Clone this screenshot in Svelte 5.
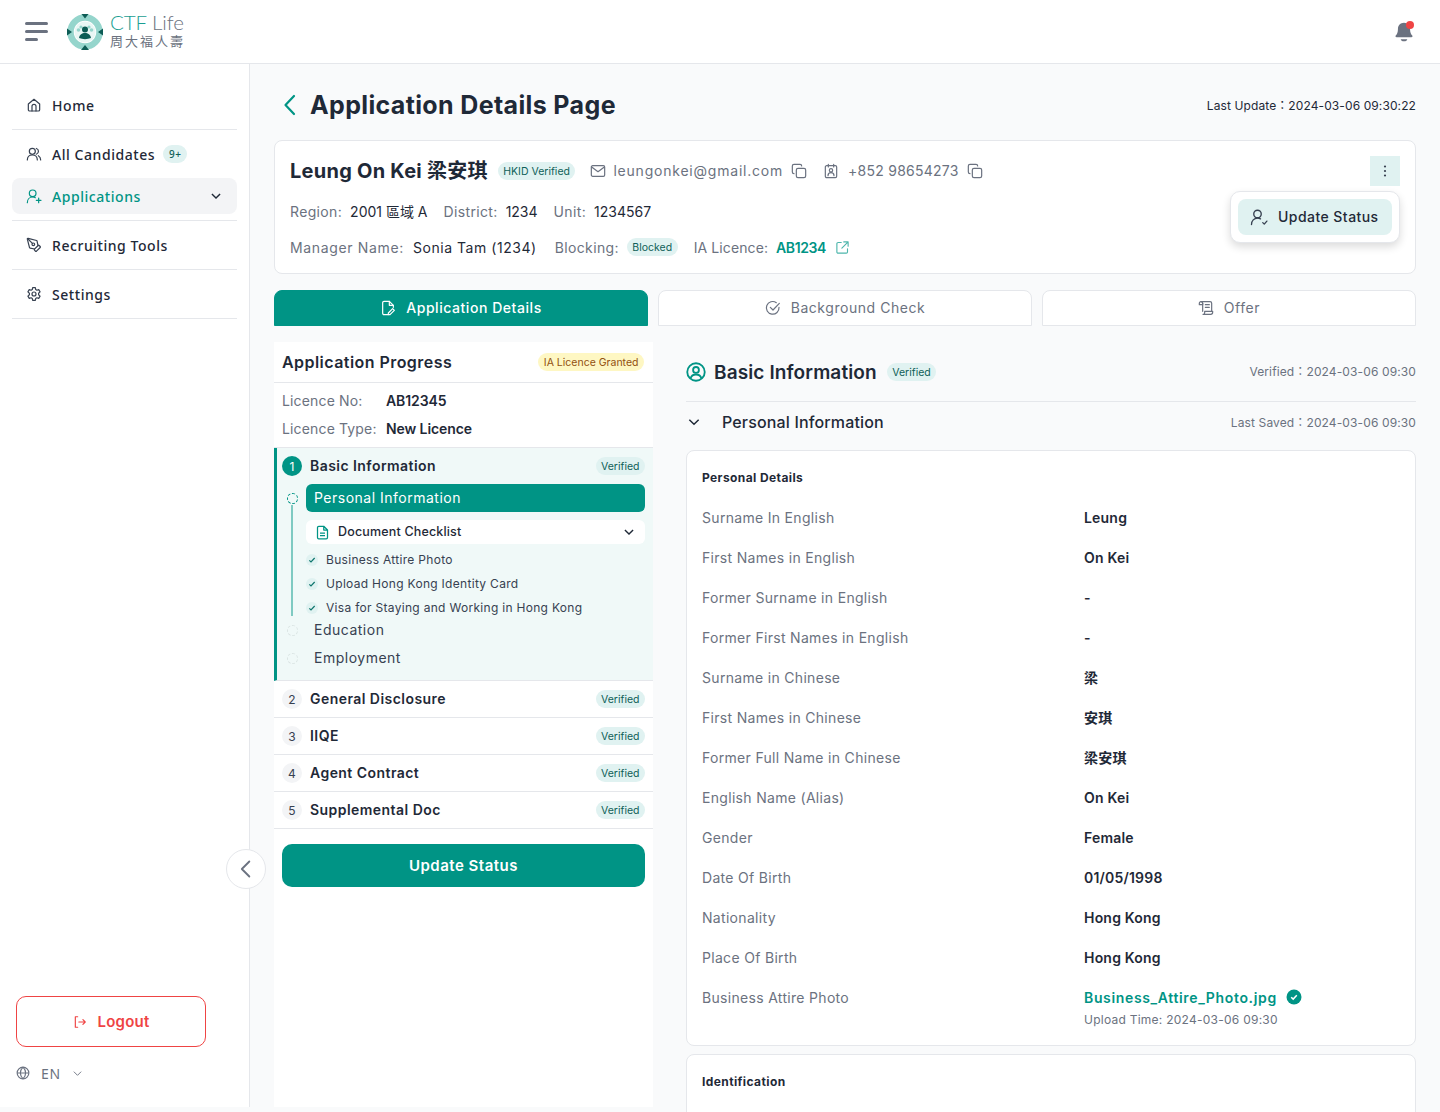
<script lang="ts">
  const details = [
    ["Surname In English", "Leung"],
    ["First Names in English", "On Kei"],
    ["Former Surname in English", "-"],
    ["Former First Names in English", "-"],
    ["Surname in Chinese", "梁"],
    ["First Names in Chinese", "安琪"],
    ["Former Full Name in Chinese", "梁安琪"],
    ["English Name (Alias)", "On Kei"],
    ["Gender", "Female"],
    ["Date Of Birth", "01/05/1998"],
    ["Nationality", "Hong Kong"],
    ["Place Of Birth", "Hong Kong"],
  ];
  const checks = [
    "Business Attire Photo",
    "Upload Hong Kong Identity Card",
    "Visa for Staying and Working in Hong Kong",
  ];
  const steps = [
    { n: 2, title: "General Disclosure" },
    { n: 3, title: "IIQE" },
    { n: 4, title: "Agent Contract" },
    { n: 5, title: "Supplemental Doc" },
  ];
</script>

<div class="shell">
  <header class="topbar">
    <button class="burger" type="button" aria-label="Menu">
      <span></span><span></span><span class="short"></span>
    </button>
    <div class="logo">
      <svg width="38" height="38" viewBox="0 0 38 38">
        <circle cx="19" cy="19" r="14.5" fill="none" stroke="#95d5cc" stroke-width="6.5" />
        <circle cx="19" cy="19" r="10.5" fill="#e9f6f4" />
        <path d="M15.5 1h7L19 5.5zM15 37l4-5 4 5zM1 15.5l5 3.5-5 3.5zM37 15.5v7l-5-3.5z" fill="#0d5c55" />
        <circle cx="12.5" cy="17" r="1.8" fill="#95d5cc" />
        <circle cx="25.5" cy="17" r="1.8" fill="#95d5cc" />
        <circle cx="15" cy="14" r="1.6" fill="#95d5cc" />
        <circle cx="23" cy="14" r="1.6" fill="#95d5cc" />
        <circle cx="19" cy="16.5" r="3" fill="#0d5c55" />
        <path d="M13 25c.5-3.500 3-5 6-5s5.500 1.500 6 5c-3.500 1.500-8.500 1.500-12 0z" fill="#0d5c55" />
      </svg>
      <div class="logo-text">
        <div class="logo-en"><span>CTF</span> <em>Life</em></div>
        <div class="logo-zh">周大福人壽</div>
      </div>
    </div>
    <div class="bell">
      <svg width="22" height="22" viewBox="0 0 20 20">
        <path d="M10 1.500c-3.300 0-5.500 2.500-5.500 5.700 0 3.300-.8 4.500-2 6-.5.7-.2 1.600.8 1.600h13.400c1 0 1.300-.9.800-1.600-1.200-1.500-2-2.700-2-6 0-3.200-2.200-5.700-5.500-5.700z" fill="#6b7280" />
        <path d="M7 16.500h6c-.4 1.300-1.600 2-3 2s-2.600-.7-3-2z" fill="#6b7280" />
      </svg>
      <i></i>
    </div>
  </header>

  <div class="body">
    <aside class="sidebar">
      <nav class="nav">
        <div class="group">
          <a class="item">
            <svg class="ico" viewBox="0 0 24 24"><path d="M3.500 10.500 12 3.500l8.500 7V19a2 2 0 0 1-2 2h-13a2 2 0 0 1-2-2z" /><path d="M9 21v-7a3 3 0 0 1 6 0v7" /></svg>
            Home
          </a>
        </div>
        <div class="group">
          <a class="item">
            <svg class="ico" viewBox="0 0 24 24"><circle cx="9.500" cy="8" r="4.500" /><path d="M2 21c0-4.500 3-7.500 7.500-7.500S17 16.500 17 21" /><path d="M15.500 3.700a4.500 4.500 0 0 1 0 8.600M18.500 14.500c2.200 1.200 3.500 3.500 3.500 6.500" /></svg>
            All Candidates
            <span class="count">9+</span>
          </a>
          <a class="item active">
            <svg class="ico" viewBox="0 0 24 24"><circle cx="10" cy="8" r="5" /><path d="M2 22c0-5 3.500-8.500 8-8.500 1.500 0 3 .4 4 1" /><path d="M19 15v7M15.500 18.500h7" /></svg>
            Applications
            <svg class="chev" viewBox="0 0 24 24"><path d="m5 8.500 7 7 7-7" /></svg>
          </a>
        </div>
        <div class="group">
          <a class="item">
            <svg class="ico" viewBox="0 0 24 24"><path d="M15.700 21.300a1 1 0 0 1-1.400 0l-1.600-1.600a1 1 0 0 1 0-1.400l5.600-5.600a1 1 0 0 1 1.400 0l1.600 1.600a1 1 0 0 1 0 1.400z" /><path d="m18 13-1.400-6.900a1 1 0 0 0-.7-.8L3.200 2a1 1 0 0 0-1.200 1.200l3.300 12.700a1 1 0 0 0 .8.700L13 18" /><path d="m2.300 2.300 7.300 7.300" /><circle cx="11" cy="11" r="2" /></svg>
            Recruiting Tools
          </a>
        </div>
        <div class="group">
          <a class="item">
            <svg class="ico" viewBox="0 0 24 24"><circle cx="12" cy="12" r="3" /><path d="M10 2.500h4l.6 2.900 1.700 1 2.800-1 2 3.400-2.200 2v2.400l2.200 2-2 3.400-2.800-1-1.700 1-.6 2.900h-4l-.6-2.900-1.700-1-2.800 1-2-3.400 2.200-2v-2.400l-2.200-2 2-3.400 2.800 1 1.700-1z" /></svg>
            Settings
          </a>
        </div>
      </nav>
      <div class="side-foot">
        <button class="logout" type="button">
          <svg width="14" height="14" viewBox="0 0 24 24" fill="none" stroke="currentColor" stroke-width="2" stroke-linecap="round" stroke-linejoin="round"><path d="M8 3H4v18h4M10 12h11M17 8l4 4-4 4" /></svg>
          Logout
        </button>
        <div class="lang">
          <svg width="14" height="14" viewBox="0 0 24 24" fill="none" stroke="#6b7280" stroke-width="2"><circle cx="12" cy="12" r="10" /><path d="M2 12h20M12 2c-6 6-6 14 0 20M12 2c6 6 6 14 0 20" /></svg>
          <span>EN</span>
          <svg width="11" height="11" viewBox="0 0 24 24" fill="none" stroke="#6b7280" stroke-width="2"><path d="m4 8 8 8 8-8" /></svg>
        </div>
      </div>
      <button class="collapse" type="button" aria-label="Collapse">
        <svg width="20" height="20" viewBox="0 0 24 24" fill="none" stroke="#6b7280" stroke-width="2.200" stroke-linecap="round" stroke-linejoin="round"><path d="M16 3 7 12l9 9" /></svg>
      </button>
    </aside>

    <main class="main">
      <div class="title-row">
        <svg width="24" height="24" viewBox="0 0 24 24" fill="none" stroke="#009485" stroke-width="2.200" stroke-linecap="round" stroke-linejoin="round"><path d="m16 3-8.500 9 8.500 9" /></svg>
        <h1>Application Details Page</h1>
        <span class="updated">Last Update：2024-03-06 09:30:22</span>
      </div>

      <section class="profile">
        <div class="line name-line">
          <h2>Leung On Kei 梁安琪</h2>
          <span class="chip">HKID Verified</span>
          <svg class="mini mail" viewBox="0 0 24 24"><rect x="2" y="4" width="20" height="16" rx="2" /><path d="m2.500 6 9.500 7 9.500-7" /></svg>
          <span class="contact email">leungonkei@gmail.com</span>
          <svg class="mini" viewBox="0 0 24 24"><rect x="8" y="8" width="14" height="14" rx="2.500" /><path d="M16 4.500A2.500 2.500 0 0 0 13.500 2h-9A2.500 2.500 0 0 0 2 4.500v9A2.500 2.500 0 0 0 4.500 16" /></svg>
          <svg class="mini idcard" viewBox="0 0 24 24"><rect x="3.500" y="4" width="17" height="18" rx="2" /><path d="M8 2v4M16 2v4" /><circle cx="12" cy="11" r="2.500" /><path d="M7.500 19c0-3 2-4.500 4.500-4.500s4.500 1.500 4.500 4.500" /></svg>
          <span class="contact">+852 98654273</span>
          <svg class="mini" viewBox="0 0 24 24"><rect x="8" y="8" width="14" height="14" rx="2.500" /><path d="M16 4.500A2.500 2.500 0 0 0 13.500 2h-9A2.500 2.500 0 0 0 2 4.500v9A2.500 2.500 0 0 0 4.500 16" /></svg>
        </div>
        <div class="line meta">
          <span class="pair"><b>Region:</b>2001 區域 A</span>
          <span class="pair"><b>District:</b>1234</span>
          <span class="pair"><b>Unit:</b>1234567</span>
        </div>
        <div class="line meta">
          <span class="pair wide"><b>Manager Name:</b>Sonia Tam (1234)</span>
          <span class="pair"><b>Blocking:</b><span class="chip">Blocked</span></span>
          <span class="pair tight"><b>IA Licence:</b><a class="licence">AB1234</a>
            <svg class="mini ext" viewBox="0 0 24 24"><path d="M20 14v5a2 2 0 0 1-2 2H5a2 2 0 0 1-2-2V6a2 2 0 0 1 2-2h5M14 3h7v7M21 3 11 13" /></svg>
          </span>
        </div>
        <button class="more" type="button" aria-label="More">
          <svg width="14" height="14" viewBox="0 0 14 14" fill="#374151"><circle cx="7" cy="2.500" r="1.100" /><circle cx="7" cy="7" r="1.100" /><circle cx="7" cy="11.500" r="1.100" /></svg>
        </button>
        <div class="popover">
          <button class="pop-btn" type="button">
            <svg width="18" height="18" viewBox="0 0 24 24" fill="none" stroke="#374151" stroke-width="1.800" stroke-linecap="round" stroke-linejoin="round"><circle cx="10" cy="8" r="5" /><path d="M2 22c0-5 3.500-8.500 8-8.500 1.800 0 3 .4 4 1" /><path d="m17 19.500 2 2 3.500-4" /></svg>
            Update Status
          </button>
        </div>
      </section>

      <div class="tabs">
        <button class="tab on" type="button">
          <svg viewBox="0 0 24 24"><path d="M12 22H6a2 2 0 0 1-2-2V4a2 2 0 0 1 2-2h8l6 6v3" /><path d="M14 2v6h6" /><path d="m19 13 2.500 2.500L15 22h-2.500v-2.500z" /></svg>
          Application Details
        </button>
        <button class="tab" type="button">
          <svg viewBox="0 0 24 24"><path d="M21 11a9.500 9.500 0 1 1-4-7" /><path d="m8 11 4 4 9.500-10" /></svg>
          Background Check
        </button>
        <button class="tab" type="button">
          <svg viewBox="0 0 24 24"><path d="M7 17V5a2.500 2.500 0 0 0-2.500-2.500H18A2.500 2.500 0 0 1 20.500 5v12" /><path d="M2 7V5a2.500 2.500 0 0 1 5 0v2zM11 7h6M11 11h6" /><path d="M10 17h12v1.500a3 3 0 0 1-3 3H7.500M10 17v2a2.500 2.500 0 0 1-2.500 2.500" /></svg>
          Offer
        </button>
      </div>

      <div class="columns">
        <div class="progress">
          <div class="prog-head">
            <h3>Application Progress</h3>
            <span class="chip amber">IA Licence Granted</span>
          </div>
          <div class="licence-box">
            <div class="lic-row"><span>Licence No:</span><b>AB12345</b></div>
            <div class="lic-row"><span>Licence Type:</span><b>New Licence</b></div>
          </div>

          <div class="step-open">
            <div class="step-head">
              <span class="num on">1</span>
              <span class="step-title">Basic Information</span>
              <span class="chip">Verified</span>
            </div>
            <div class="sub-wrap">
              <div class="rail"></div>
              <div class="sub pill"><i class="dot live"></i>Personal Information</div>
              <div class="doc">
                <svg width="15" height="15" viewBox="0 0 24 24" fill="none" stroke="#009485" stroke-width="2" stroke-linejoin="round"><path d="M14 2H6a2 2 0 0 0-2 2v16a2 2 0 0 0 2 2h12a2 2 0 0 0 2-2V8zM14 2v6h6M8 13h8M8 17h8" /></svg>
                <span>Document Checklist</span>
                <svg class="doc-chev" width="14" height="14" viewBox="0 0 24 24" fill="none" stroke="#1f2937" stroke-width="2.400"><path d="m5 8.500 7 7 7-7" /></svg>
              </div>
              <ul class="checks">
                {#each checks as c}
                  <li>
                    <span class="tick"><svg width="8" height="8" viewBox="0 0 12 12" fill="none" stroke="#0f766e" stroke-width="1.800"><path d="m2 6.500 2.500 2.500L10 3" /></svg></span>
                    {c}
                  </li>
                {/each}
              </ul>
              <div class="sub"><i class="dot"></i>Education</div>
              <div class="sub"><i class="dot"></i>Employment</div>
            </div>
          </div>

          {#each steps as s}
            <div class="step">
              <span class="num">{s.n}</span>
              <span class="step-title">{s.title}</span>
              <span class="chip">Verified</span>
            </div>
          {/each}

          <button class="primary" type="button">Update Status</button>
        </div>

        <div class="info">
          <div class="info-head">
            <svg width="20" height="20" viewBox="0 0 24 24" fill="none" stroke="#009485" stroke-width="2.200"><circle cx="12" cy="12" r="10.500" /><circle cx="12" cy="9.500" r="3.500" /><path d="M5.500 19.500c1-3 3.500-4.500 6.500-4.500s5.500 1.500 6.500 4.500" /></svg>
            <h3>Basic Information</h3>
            <span class="chip">Verified</span>
            <span class="stamp">Verified：2024-03-06 09:30</span>
          </div>
          <div class="info-sub">
            <svg width="16" height="16" viewBox="0 0 24 24" fill="none" stroke="#1f2937" stroke-width="2.200"><path d="m5 8.500 7 7 7-7" /></svg>
            <h4>Personal Information</h4>
            <span class="stamp">Last Saved：2024-03-06 09:30</span>
          </div>

          <section class="panel">
            <h5>Personal Details</h5>
            {#each details as [label, value]}
              <div class="row"><span class="lab">{label}</span><span class="val">{value}</span></div>
            {/each}
            <div class="row last">
              <span class="lab">Business Attire Photo</span>
              <div class="file">
                <div class="file-top">
                  <a class="file-name">Business_Attire_Photo.jpg</a>
                  <svg width="16" height="16" viewBox="0 0 16 16"><circle cx="8" cy="8" r="7.500" fill="#009485" /><path d="m5.200 8.200 2 1.900 3.600-3.800" fill="none" stroke="#fff" stroke-width="1.500" /></svg>
                </div>
                <div class="file-time">Upload Time: 2024-03-06 09:30</div>
              </div>
            </div>
          </section>

          <section class="panel next">
            <h5>Identification</h5>
          </section>
        </div>
      </div>
    </main>
  </div>
</div>

<style>
  :global(body) {
    margin: 0;
    background: #f9fafb;
  }

  .shell {
    width: 1440px;
    height: 1112px;
    overflow: hidden;
    background: #f9fafb;
    color: #1f2937;
    font-family: Inter, "Noto Sans CJK TC", sans-serif;
  }

  button {
    font-family: inherit;
    cursor: pointer;
  }

  .topbar {
    display: flex;
    align-items: center;
    height: 63px;
    padding: 0 24px 0 25px;
    background: #fff;
    border-bottom: 1px solid #e5e7eb;
  }

  .burger {
    display: flex;
    flex-direction: column;
    gap: 5px;
    width: 23px;
    padding: 0;
    border: 0;
    background: none;
  }

  .burger span {
    display: block;
    width: 23px;
    height: 3px;
    border-radius: 2px;
    background: #6b7280;
  }

  .burger .short {
    width: 13px;
  }

  .logo {
    display: flex;
    align-items: center;
    gap: 6px;
    margin-left: 18px;
  }

  .logo-text {
    display: flex;
    flex-direction: column;
  }

  .logo-en {
    font-family: Lato, sans-serif;
    font-size: 20.500px;
    font-weight: 300;
    line-height: 16px;
    letter-spacing: -0.1px;
    color: #1a9e92;
  }

  .logo-en em {
    font-style: normal;
    color: #6b7280;
  }

  .logo-zh {
    margin-top: 3px;
    font-family: "Noto Sans CJK TC", sans-serif;
    font-size: 13px;
    line-height: 16px;
    letter-spacing: 2px;
    color: #6b7280;
  }

  .bell {
    position: relative;
    width: 22px;
    height: 22px;
    margin-left: auto;
    margin-right: 1px;
  }

  .bell svg {
    display: block;
  }

  .bell i {
    position: absolute;
    top: 0;
    left: 13px;
    width: 8px;
    height: 8px;
    border-radius: 50%;
    background: #ef4444;
  }

  .body {
    display: flex;
    height: 1043px;
  }

  .sidebar {
    position: relative;
    display: flex;
    flex-direction: column;
    flex: none;
    padding-top: 17px;
    box-sizing: border-box;
    background: #fff;
    border-right: 1px solid #e5e7eb;
    width: 250px;
    font-family: "Noto Sans", sans-serif;
  }

  .nav {
    padding: 0 12px;
  }

  .group {
    display: flex;
    flex-direction: column;
    gap: 6px;
    padding: 6px 0;
    border-bottom: 1px solid #e5e7eb;
  }

  .item {
    display: flex;
    align-items: center;
    gap: 10px;
    height: 36px;
    padding: 0 14px;
    border-radius: 8px;
    font-size: 14px;
    font-weight: 500;
    letter-spacing: 0.55px;
    color: #1f2937;
  }

  .item.active {
    background: #f3f4f6;
    color: #009485;
  }

  .ico {
    flex: none;
    width: 16px;
    height: 16px;
    fill: none;
    stroke: #374151;
    stroke-width: 1.800;
    stroke-linecap: round;
    stroke-linejoin: round;
  }

  .active .ico {
    stroke: #009485;
  }

  .count {
    margin-left: -2px;
    padding: 0 6px;
    height: 18px;
    line-height: 18px;
    border-radius: 9px;
    background: #e0f2f1;
    color: #0f5f58;
    font-size: 10px;
    letter-spacing: 0.4px;
  }

  .chev {
    width: 14px;
    height: 14px;
    margin-left: auto;
    fill: none;
    stroke: #1f2937;
    stroke-width: 2.400;
  }

  .side-foot {
    margin-top: auto;
    padding: 0 16px 24px;
  }

  .logout {
    display: flex;
    align-items: center;
    justify-content: center;
    gap: 11px;
    width: 190px;
    height: 51px;
    padding: 0;
    background: #fff;
    border: 1px solid #ef4444;
    border-radius: 10px;
    color: #ef4444;
    font-family: Inter, sans-serif;
    font-size: 15px;
    font-weight: 600;
    letter-spacing: 0.2px;
  }

  .lang {
    display: flex;
    align-items: center;
    height: 20px;
    margin-top: 16px;
    color: #6b7280;
    font-size: 14px;
    letter-spacing: 0.6px;
  }

  .lang span {
    margin: 0 11px;
  }

  .collapse {
    position: absolute;
    top: 785px;
    left: 226px;
    display: flex;
    align-items: center;
    justify-content: center;
    width: 40px;
    height: 40px;
    padding: 0;
    background: #fff;
    border: 1px solid #e5e7eb;
    border-radius: 50%;
  }

  .main {
    flex: 1;
    min-width: 0;
    padding: 0 24px;
  }

  .title-row {
    display: flex;
    align-items: center;
    height: 76px;
    padding-top: 6px;
    box-sizing: border-box;
    gap: 8px;
    margin-left: 4px;
  }

  .title-row h1 {
    margin: 0;
    font-size: 25px;
    font-weight: 700;
    letter-spacing: 0.36px;
    color: #1f2937;
  }

  .updated {
    margin-left: auto;
    padding-bottom: 2px;
    font-size: 12px;
    letter-spacing: 0.1px;
    color: #1f2937;
  }

  .profile {
    position: relative;
    box-sizing: border-box;
    height: 134px;
    padding: 15px 15px 0;
    background: #fff;
    border: 1px solid #e5e7eb;
    border-radius: 8px;
  }

  .line {
    display: flex;
    align-items: center;
    height: 30px;
  }

  .name-line h2 {
    margin: 0 10px 0 0;
    padding-bottom: 4px;
    font-size: 20px;
    font-weight: 700;
    letter-spacing: 0.25px;
    white-space: nowrap;
  }

  .mini {
    flex: none;
    width: 16px;
    height: 16px;
    fill: none;
    stroke: #6b7280;
    stroke-width: 1.800;
    stroke-linecap: round;
    stroke-linejoin: round;
  }

  .mail {
    margin: 0 7px 0 15px;
  }

  .idcard {
    margin: 0 9px 0 16px;
  }

  .contact {
    margin-right: 8px;
    padding-bottom: 2px;
    font-size: 14px;
    color: #6b7280;
    letter-spacing: 0.25px;
  }

  .contact.email {
    letter-spacing: 0.78px;
  }

  .chip {
    display: inline-block;
    flex: none;
    box-sizing: border-box;
    height: 18px;
    padding: 0 5.500px;
    border-radius: 9px;
    background: #e0f2f1;
    color: #0f5f58;
    font-size: 10.500px;
    line-height: 19px;
    letter-spacing: 0;
    white-space: nowrap;
  }

  .chip.amber {
    background: #fef7c3;
    color: #92500f;
  }

  .meta {
    height: 36px;
    gap: 16px;
    font-size: 14px;
  }

  .name-line + .meta {
    margin-top: 7px;
  }

  .pair {
    display: flex;
    align-items: center;
    gap: 8px;
    white-space: nowrap;
  }

  .pair.wide {
    gap: 9px;
    margin-right: 2px;
    letter-spacing: 0.55px;
  }

  .pair b {
    font-weight: 400;
    letter-spacing: 0.35px;
    color: #6b7280;
  }

  .pair.wide b {
    letter-spacing: 0.65px;
  }

  .pair.tight b {
    letter-spacing: 0.1px;
  }

  .licence {
    font-weight: 600;
    letter-spacing: -0.4px;
    color: #009485;
  }

  .ext {
    margin-left: 1px;
    width: 15px;
    height: 15px;
    stroke: #4db6ac;
  }

  .more {
    position: absolute;
    top: 15px;
    right: 15px;
    display: flex;
    align-items: center;
    justify-content: center;
    width: 30px;
    height: 30px;
    padding: 0;
    border: 0;
    background: #e0f2f1;
  }

  .popover {
    position: absolute;
    top: 50px;
    right: 15px;
    padding: 7px;
    background: #fff;
    border: 1px solid #e5e7eb;
    border-radius: 10px;
    box-shadow: 0 4px 8px rgb(0 0 0 / 0.14);
  }

  .pop-btn {
    display: flex;
    align-items: center;
    gap: 10px;
    width: 154px;
    height: 36px;
    padding: 0 12px 2px;
    box-sizing: border-box;
    border: 0;
    border-radius: 8px;
    background: #e0f2f1;
    color: #1f2937;
    font-size: 14px;
    font-weight: 500;
    letter-spacing: 0.45px;
    white-space: nowrap;
  }

  .pop-btn svg {
    margin-top: 2px;
  }

  .tabs {
    display: flex;
    gap: 10px;
    margin-top: 16px;
  }

  .tab {
    display: flex;
    flex: 1;
    align-items: center;
    justify-content: center;
    gap: 10px;
    height: 36px;
    padding: 0 0 2px;
    background: #fff;
    border: 1px solid #e5e7eb;
    border-radius: 8px 8px 0 0;
    color: #6b7280;
    font-size: 14px;
    letter-spacing: 0.55px;
  }

  .tab svg {
    width: 16px;
    height: 16px;
    margin-top: 2px;
    fill: none;
    stroke: currentColor;
    stroke-width: 1.800;
    stroke-linecap: round;
    stroke-linejoin: round;
  }

  .tab.on {
    background: #009485;
    border-color: #009485;
    color: #fff;
    font-weight: 500;
  }

  .columns {
    display: flex;
    gap: 33px;
    margin-top: 16px;
  }

  .progress {
    flex: none;
    box-sizing: border-box;
    width: 379px;
    height: 765px;
    background: #fff;
  }

  .prog-head {
    display: flex;
    align-items: center;
    justify-content: space-between;
    height: 40px;
    padding: 0 9px 0 8px;
    border-bottom: 1px solid #e5e7eb;
  }

  .prog-head h3 {
    margin: 0;
    font-size: 16px;
    font-weight: 600;
    letter-spacing: 0.45px;
  }

  .licence-box {
    padding: 4px 8px;
    border-bottom: 1px solid #e5e7eb;
  }

  .lic-row {
    display: flex;
    align-items: center;
    box-sizing: border-box;
    height: 28px;
    padding-bottom: 2px;
    font-size: 14px;
  }

  .lic-row span {
    width: 104px;
    letter-spacing: 0.15px;
    color: #6b7280;
  }

  .lic-row b {
    font-weight: 600;
    letter-spacing: -0.1px;
  }

  .step-open {
    box-sizing: border-box;
    padding: 0 8px 8px 5px;
    background: #f0f9f8;
    border-left: 3px solid #009485;
    border-bottom: 1px solid #e5e7eb;
  }

  .step-head {
    display: flex;
    align-items: center;
    height: 36px;
  }

  .step-title {
    margin-left: 8px;
    padding-bottom: 2px;
    font-size: 14px;
    font-weight: 600;
    letter-spacing: 0.45px;
  }

  .step-open .chip,
  .step .chip {
    margin-left: auto;
  }

  .num {
    display: flex;
    flex: none;
    align-items: center;
    justify-content: center;
    width: 20px;
    height: 20px;
    border-radius: 50%;
    background: #f3f4f6;
    color: #374151;
    font-size: 12px;
  }

  .num.on {
    background: #009485;
    color: #fff;
  }

  .sub-wrap {
    position: relative;
    padding-left: 24px;
  }

  .rail {
    position: absolute;
    top: 21px;
    left: 9px;
    width: 2px;
    height: 111px;
    background: #7fcac2;
  }

  .sub {
    position: relative;
    display: flex;
    align-items: center;
    box-sizing: border-box;
    height: 28px;
    padding: 0 0 2px 8px;
    font-size: 14px;
    letter-spacing: 0.5px;
    color: #374151;
  }

  .sub.pill {
    border-radius: 6px;
    background: #009485;
    color: #fff;
  }

  .dot {
    position: absolute;
    top: 9px;
    left: -24px;
    box-sizing: border-box;
    width: 11px;
    height: 11px;
    margin-left: 5px;
    border-radius: 50%;
    border: 1px dashed #dbe5e4;
  }

  .dot.live {
    border-color: #009485;
    background: #f0f9f8;
  }

  .doc {
    display: flex;
    align-items: center;
    gap: 8px;
    height: 24px;
    margin-top: 8px;
    padding: 0 9px;
    border-radius: 6px;
    background: #fff;
    font-size: 12.500px;
    font-weight: 500;
    letter-spacing: 0.17px;
  }

  .doc span {
    padding-bottom: 2px;
  }

  .doc-chev {
    margin-left: auto;
  }

  .checks {
    display: flex;
    flex-direction: column;
    gap: 8px;
    margin: 8px 0 0;
    padding: 0;
    list-style: none;
  }

  .checks li {
    display: flex;
    align-items: center;
    box-sizing: border-box;
    gap: 8px;
    height: 16px;
    padding-bottom: 2px;
    font-size: 12px;
    letter-spacing: 0.3px;
    color: #374151;
  }

  .tick {
    display: flex;
    align-items: center;
    justify-content: center;
    width: 12px;
    height: 12px;
    margin-top: 2px;
    border-radius: 50%;
    background: #e0f2f1;
  }

  .step {
    display: flex;
    align-items: center;
    height: 36px;
    padding: 0 8px 0 8px;
    border-bottom: 1px solid #e5e7eb;
  }

  .primary {
    display: block;
    width: 363px;
    height: 43px;
    margin: 15px 0 0 8px;
    border: 0;
    border-radius: 10px;
    background: #009485;
    color: #fff;
    font-size: 15px;
    font-weight: 600;
    letter-spacing: 0.5px;
  }

  .info {
    flex: 1;
    min-width: 0;
  }

  .info-head {
    display: flex;
    align-items: center;
    gap: 8px;
    height: 59px;
    border-bottom: 1px solid #e5e7eb;
  }

  .info-head h3 {
    margin: 0 2px 0 0;
    padding-top: 2px;
    font-size: 19px;
    font-weight: 600;
    letter-spacing: 0.12px;
  }

  .stamp {
    margin-left: auto;
    padding-bottom: 2px;
    font-size: 12px;
    letter-spacing: 0.12px;
    color: #6b7280;
  }

  .info-sub {
    display: flex;
    align-items: center;
    gap: 20px;
    height: 40px;
    margin-bottom: 8px;
  }

  .info-sub h4 {
    margin: 0;
    font-size: 16px;
    font-weight: 500;
    letter-spacing: 0.15px;
  }

  .panel {
    box-sizing: border-box;
    margin-bottom: 8px;
    padding: 17px 15px 18px;
    background: #fff;
    border: 1px solid #e5e7eb;
    border-radius: 8px;
  }

  .panel.next {
    min-height: 120px;
  }

  .panel h5 {
    margin: 0 0 9px;
    font-size: 12px;
    line-height: 20px;
    font-weight: 700;
    letter-spacing: 0.4px;
  }

  .row {
    display: flex;
    align-items: center;
    height: 40px;
    font-size: 14px;
  }

  .row.last {
    align-items: flex-start;
    height: auto;
    padding-top: 12px;
  }

  .lab {
    flex: none;
    width: 382px;
    letter-spacing: 0.31px;
    color: #6b7280;
  }

  .val {
    font-weight: 600;
    letter-spacing: 0.2px;
    color: #1f2937;
  }

  .file-top {
    display: flex;
    align-items: flex-start;
    gap: 9px;
  }

  .file-name {
    font-weight: 600;
    letter-spacing: 0.65px;
    color: #009485;
  }

  .file-time {
    margin-top: 6px;
    font-size: 12px;
    letter-spacing: 0.25px;
    color: #6b7280;
  }
</style>
